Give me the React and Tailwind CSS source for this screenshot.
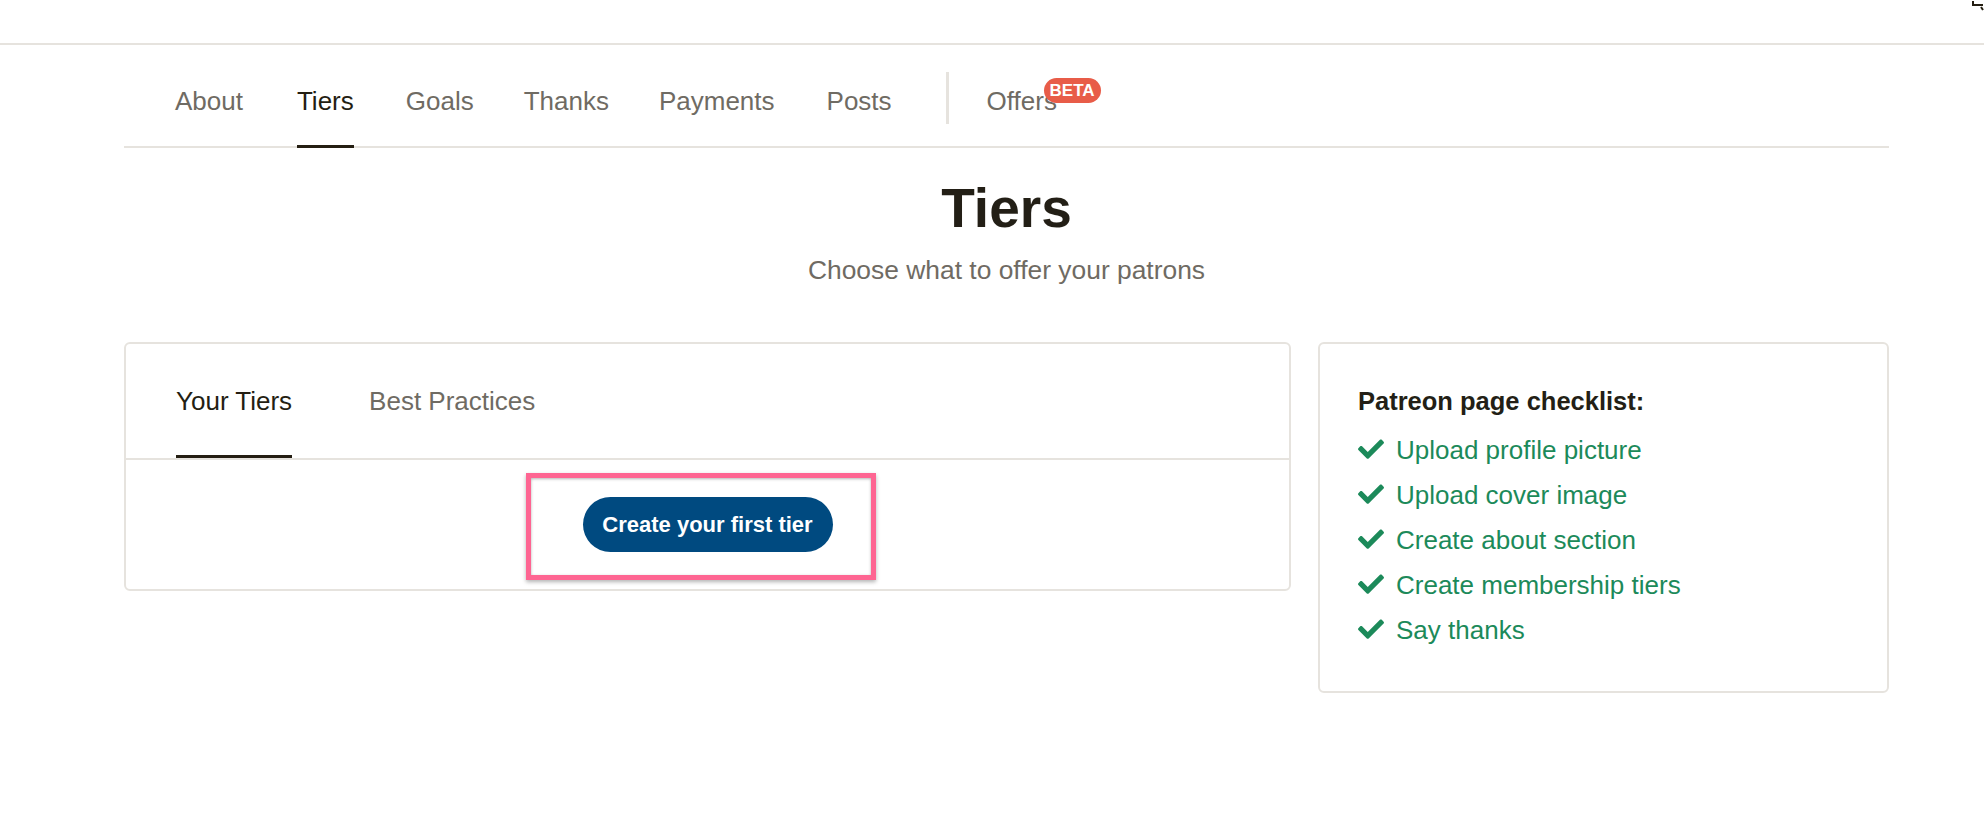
import React from 'react';

const navItems = [
  { label: 'About', space: '' },
  { label: 'Tiers', space: 'ml-[54px]' },
  { label: 'Goals', space: 'ml-[52px]' },
  { label: 'Thanks', space: 'ml-[50px]' },
  { label: 'Payments', space: 'ml-[50px]' },
  { label: 'Posts', space: 'ml-[52px]' },
];

const checklist = [
  'Upload profile picture',
  'Upload cover image',
  'Create about section',
  'Create membership tiers',
  'Say thanks',
];

function Check() {
  return (
    <svg viewBox="0 0 512 380" className="w-[26px] h-[20px] -mt-[4px] shrink-0" fill="#1c8a5a">
      <path d="M173.9 375.4L7.5 209c-10-10-10-26.2 0-36.2l36.2-36.2c10-10 26.2-10 36.2 0L192 248.7 432.1 8.6c10-10 26.2-10 36.2 0l36.2 36.2c10 10 10 26.2 0 36.2L210.1 375.4c-10 10-26.2 10-36.2 0z" />
    </svg>
  );
}

export default function App() {
  return (
    <div className="min-h-screen bg-white font-['Liberation_Sans',Arial,sans-serif] text-[#241e12]">
      {/* top bar */}
      <div className="relative h-[45px] border-b-2 border-[#e6e3de]">
        <svg viewBox="0 0 14 12" className="absolute right-0 top-0 w-[14px] h-[12px]" fill="none" stroke="#241e12" strokeWidth="2">
          <path d="M3 1v4h10" />
          <path d="M11 7l2 3" />
        </svg>
      </div>

      <div className="pl-[124px] pr-[95px]">
        {/* nav */}
        <div className="flex items-end border-b-2 border-[#e6e3de] pl-[51px]">
          {navItems.map((item) => (
            <div
              key={item.label}
              className={`${item.space} pt-[40px] pb-[28px] -mb-[2px] text-[26px] leading-[32px] border-b-[3px] ${
                item.label === 'Tiers' ? 'border-[#241e12] text-[#241e12]' : 'border-transparent text-[#6f6b63]'
              }`}
            >
              {item.label}
            </div>
          ))}
          <div className="self-start mt-[27px] ml-[54px] mr-[38px] h-[52px] w-[3px] bg-[#e6e3de]" />
          <div className="pt-[40px] pb-[28px] -mb-[2px] text-[26px] leading-[32px] border-b-[3px] border-transparent text-[#6f6b63]">
            <span className="relative">
              Offers
              <span className="absolute left-[57px] -top-[8px] h-[25px] w-[57px] rounded-full bg-[#e85c48] text-white text-[17px] font-bold leading-[25px] text-center">
                BETA
              </span>
            </span>
          </div>
        </div>

        {/* heading */}
        <h1 className="mt-[28px] text-center text-[55px] leading-[64px] font-bold text-[#231f16]">Tiers</h1>
        <p className="mt-[14px] text-center text-[26.4px] leading-[32px] text-[#6f6b63]">Choose what to offer your patrons</p>

        {/* cards */}
        <div className="mt-[56px] flex items-start gap-[27px]">
          <div className="w-[1167px] border-2 border-[#e6e3de] rounded-[6px]">
            <div className="flex gap-[77px] pl-[50px] border-b-2 border-[#e6e3de]">
              <div className="pt-[41px] pb-[38px] text-[26px] leading-[32px] border-b-[3px] border-[#241e12] text-[#241e12]">
                Your Tiers
              </div>
              <div className="pt-[41px] pb-[38px] text-[26px] leading-[32px] border-b-[3px] border-transparent text-[#6f6b63]">
                Best Practices
              </div>
            </div>
            <div className="flex justify-center py-[37px]">
              <div className="relative">
                <button className="h-[55px] w-[250px] rounded-full bg-[#004a80] text-white text-[22px] font-bold">
                  Create your first tier
                </button>
                <div className="pointer-events-none absolute -left-[57px] -right-[43px] -top-[24px] -bottom-[28px] border-[5px] border-[#fe6592] shadow-[0_2px_4px_rgba(0,0,0,0.3),inset_0_1px_3px_rgba(0,0,0,0.3)]" />
              </div>
            </div>
          </div>

          <div className="w-[571px] border-2 border-[#e6e3de] rounded-[6px] pl-[38px] pt-[41px] pb-[38px]">
            <div className="text-[25.5px] leading-[32px] font-bold text-[#231f16]">Patreon page checklist:</div>
            <ul className="mt-[11px]">
              {checklist.map((item) => (
                <li key={item} className="flex items-center gap-[12px] text-[26px] leading-[45px] text-[#1c8a5a]">
                  <Check />
                  <span>{item}</span>
                </li>
              ))}
            </ul>
          </div>
        </div>
      </div>
    </div>
  );
}
